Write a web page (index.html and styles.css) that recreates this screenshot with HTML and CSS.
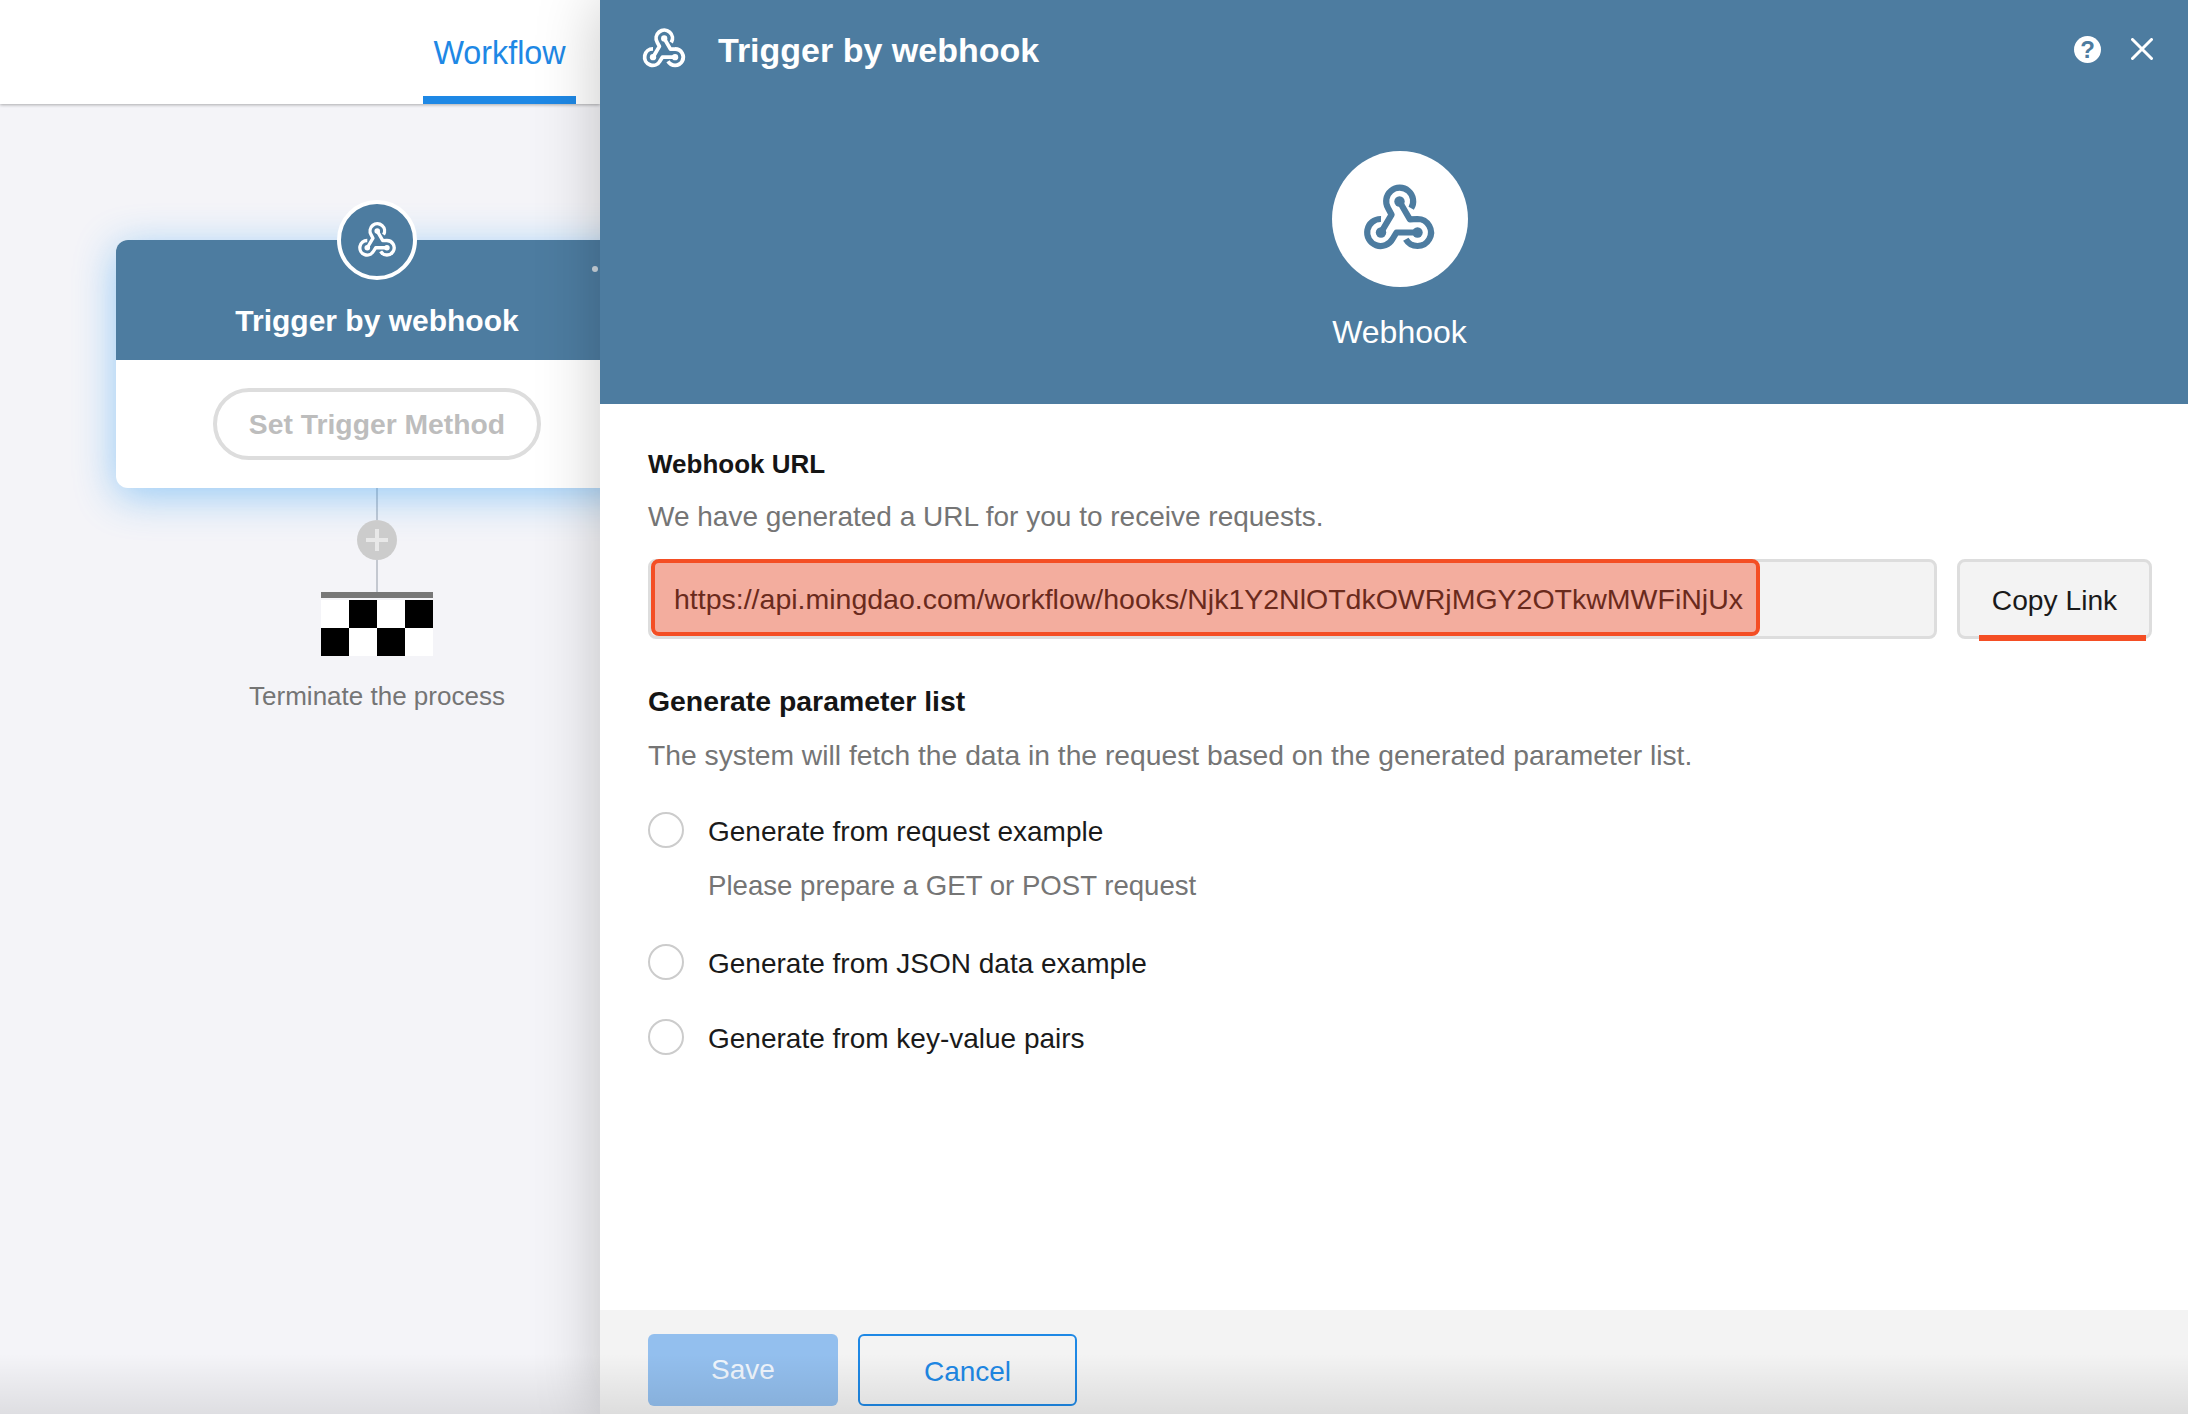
FILE: index.html
```html
<!DOCTYPE html>
<html lang="en">
<head>
<meta charset="utf-8">
<title>Trigger by webhook</title>
<link rel="stylesheet" href="styles.css">
</head>
<body>
<svg class="defs" width="0" height="0" aria-hidden="true">
  <symbol id="hook" viewBox="0 0 80 76">
    <g fill="none" stroke="currentColor" stroke-width="6.2" stroke-linecap="butt" stroke-linejoin="round">
      <path d="M21 51.5 L31.6 33.7 L28 27 A13.5 13.5 0 1 1 51.2 27.25"/>
      <path d="M39.5 20.5 L49.8 38.3 L57.5 38 A13.5 13.5 0 1 1 45.8 58.25"/>
      <path d="M57.5 51.5 H36.5 L32.5 58 A13.5 13.5 0 1 1 21 38"/>
    </g>
    <circle cx="39.5" cy="20.5" r="5.2" fill="currentColor"/>
    <circle cx="21" cy="51.5" r="5.2" fill="currentColor"/>
    <circle cx="57.5" cy="51.5" r="5.2" fill="currentColor"/>
  </symbol>
</svg>
<main class="app">
  <section class="flow">
    <header class="flow-top">
      <a class="tab">Workflow</a>
    </header>
    <div class="canvas">
      <article class="card">
        <div class="card-badge"><svg class="icon-small"><use href="#hook"/></svg></div>
        <div class="card-head">Trigger by webhook<i class="card-dot"></i></div>
        <div class="card-body"><span class="pill">Set Trigger Method</span></div>
      </article>
      <div class="line line-a"></div>
      <div class="plus"><span class="plus-h"></span><span class="plus-v"></span></div>
      <div class="line line-b"></div>
      <div class="flag">
        <div class="flag-bar"></div>
        <div class="flag-grid">
          <i></i><b></b><i></i><b></b>
          <b></b><i></i><b></b><i></i>
        </div>
      </div>
      <p class="end-label">Terminate the process</p>
    </div>
  </section>
  <section class="panel">
    <header class="panel-head">
      <div class="panel-bar">
        <svg class="icon-title"><use href="#hook"/></svg>
        <h1 class="panel-title">Trigger by webhook</h1>
        <span class="help">?</span>
        <svg class="close" viewBox="0 0 22 22"><path d="M1.5 1.5 20.5 20.5M20.5 1.5 1.5 20.5"/></svg>
      </div>
      <div class="hero">
        <div class="hero-circle"><svg class="icon-hero"><use href="#hook"/></svg></div>
        <div class="hero-name">Webhook</div>
      </div>
    </header>
    <div class="panel-body">
      <h2 class="heading">Webhook URL</h2>
      <p class="desc">We have generated a URL for you to receive requests.</p>
      <div class="url-row">
        <div class="url-field"><span class="url-mark">https://api.mingdao.com/workflow/hooks/Njk1Y2NlOTdkOWRjMGY2OTkwMWFiNjUx</span></div>
        <div class="copy">Copy Link<i class="copy-mark"></i></div>
      </div>
      <h2 class="heading heading-second">Generate parameter list</h2>
      <p class="desc desc-second">The system will fetch the data in the request based on the generated parameter list.</p>
      <div class="options">
        <div class="option"><span class="radio"></span><span class="option-label">Generate from request example</span></div>
        <p class="hint">Please prepare a GET or POST request</p>
        <div class="option option-mid"><span class="radio"></span><span class="option-label">Generate from JSON data example</span></div>
        <div class="option option-last"><span class="radio"></span><span class="option-label">Generate from key-value pairs</span></div>
      </div>
    </div>
    <footer class="panel-foot">
      <button class="btn btn-save">Save</button>
      <button class="btn btn-cancel">Cancel</button>
    </footer>
  </section>
</main>
<div class="vignette"></div>
</body>
</html>
```
FILE: styles.css
```css
* { box-sizing: border-box; }
html, body { margin: 0; height: 100%; overflow: hidden; }
body { font-family: "Liberation Sans", Arial, sans-serif; background: #f4f4f8; }
.defs { position: absolute; }
.app { display: flex; height: 1414px; width: 2188px; }
.flow { width: 600px; flex: none; overflow: hidden; position: relative; }
.flow-top { height: 104px; background: #fff; display: flex; justify-content: flex-end; padding-right: 24px; box-shadow: 0 1px 3px rgba(0,0,0,.3); position: relative; z-index: 1; }
.tab { width: 153px; height: 104px; border-bottom: 8px solid #1e88e5; color: #1e88e5; font-size: 32.3px; text-align: center; line-height: 106px; }
.canvas { display: flex; flex-direction: column; align-items: flex-start; padding: 136px 0 0 116px; }
.card { width: 522px; height: 248px; border-radius: 12px; background: #fff; box-shadow: 0 8px 40px rgba(33,150,243,.45); position: relative; flex: none; }
.card-badge { position: absolute; left: 221px; top: -40px; width: 80px; height: 80px; border-radius: 50%; background: #4d7ca0; border: 4px solid #fff; color: #fff; display: flex; align-items: center; justify-content: center; z-index: 1; }
.icon-small { width: 43px; height: 41px; }
.card-head { height: 120px; background: #4d7ca0; color: #fff; border-radius: 12px 12px 0 0; font-size: 30px; font-weight: 700; text-align: center; line-height: 162px; position: relative; }
.card-dot { position: absolute; left: 476px; top: 26px; width: 6px; height: 6px; border-radius: 50%; background: #ccd6de; }
.card-body { height: 128px; display: flex; align-items: flex-start; justify-content: center; padding-top: 28px; }
.pill { width: 328px; height: 72px; border: 4px solid #ddd; border-radius: 36px; color: #bdbdbd; font-size: 28.3px; font-weight: 700; text-align: center; line-height: 64px; }
.line { width: 2px; background: #c4c8d0; margin-left: 260px; }
.line-a { height: 32px; }
.line-b { height: 32px; }
.plus { width: 40px; height: 40px; margin-left: 241px; border-radius: 50%; background: #ccc; position: relative; }
.plus-h, .plus-v { position: absolute; background: #e8e8e8; }
.plus-h { left: 9px; top: 18px; width: 22px; height: 4px; }
.plus-v { left: 18px; top: 9px; width: 4px; height: 22px; }
.flag { margin-left: 205px; width: 112px; }
.flag-bar { height: 6px; background: #777; margin-bottom: 2px; }
.flag-grid { display: grid; grid-template-columns: repeat(4, 28px); grid-auto-rows: 28px; }
.flag-grid i { background: #fff; }
.flag-grid b { background: #000; }
.end-label { margin: 24px 0 0; width: 522px; text-align: center; color: #757575; font-size: 26px; line-height: 32px; }
.panel { width: 1588px; flex: none; display: flex; flex-direction: column; background: #fff; box-shadow: 0 0 60px rgba(0,0,0,.22); position: relative; z-index: 2; }
.panel-head { height: 404px; background: #4d7ca0; color: #fff; flex: none; }
.panel-bar { display: flex; align-items: center; height: 98px; padding: 0 35px 0 40px; }
.icon-title { width: 49px; height: 46px; color: #fff; margin-right: 29px; }
.panel-title { margin: 2px 0 0; font-size: 34px; font-weight: 700; flex: 1; }
.help { width: 27px; height: 27px; border-radius: 50%; background: #fff; color: #4d7ca0; font-size: 24px; font-weight: 700; line-height: 28px; text-align: center; margin-right: 30px; }
.close { width: 22px; height: 22px; fill: none; stroke: #fff; stroke-width: 3; stroke-linecap: round; }
.hero { display: flex; flex-direction: column; align-items: center; padding: 53px 0 0 11px; }
.hero-circle { width: 136px; height: 136px; border-radius: 50%; background: #fff; color: #4d7ca0; display: flex; align-items: center; justify-content: center; }
.icon-hero { width: 80px; height: 76px; }
.hero-name { font-size: 32px; margin-top: 26px; line-height: 38px; }
.panel-body { flex: 1; padding: 45px 36px 0 48px; }
.heading { margin: 0; font-size: 26px; font-weight: 700; color: #151515; line-height: 30px; }
.heading-second { margin-top: 47px; font-size: 28.4px; }
.desc { margin: 22px 0 0; font-size: 28px; color: #757575; line-height: 32px; }
.desc-second { font-size: 28.25px; margin-top: 23px; }
.url-row { display: flex; gap: 20px; margin-top: 26px; }
.url-field { width: 1289px; height: 80px; background: #f3f3f3; border: 3px solid #ddd; border-radius: 8px; }
.url-mark { display: block; width: 1109px; height: 77px; margin: -3px 0 0 0; background: #f3ad9e; border: 4px solid #f44e24; border-radius: 8px; color: #6a2a1c; font-size: 28.5px; line-height: 73px; padding-left: 19px; white-space: nowrap; }
.copy { width: 195px; height: 80px; background: #f3f3f3; border: 3px solid #ddd; border-radius: 8px; font-size: 28.2px; color: #1a1a1a; text-align: center; line-height: 77px; position: relative; }
.copy-mark { position: absolute; left: 19px; top: 73px; width: 167px; height: 6px; background: #f44e24; }
.options { margin-top: 41px; }
.option { display: flex; align-items: center; gap: 24px; height: 36px; font-size: 28px; color: #1a1a1a; }
.option-label { padding-top: 4px; }
.radio { width: 36px; height: 36px; border: 2px solid #ccc; border-radius: 50%; flex: none; background: #fff; }
.hint { margin: 22px 0 0 60px; font-size: 27.6px; color: #757575; line-height: 32px; }
.option-mid { margin-top: 42px; }
.option-last { margin-top: 39px; }
.panel-foot { height: 104px; flex: none; background: #f3f3f3; display: flex; gap: 20px; padding: 24px 0 0 48px; }
.btn { height: 72px; border-radius: 6px; font-family: inherit; font-size: 28px; padding: 0; }
.btn-save { width: 190px; background: #93bfee; border: 0; color: #f0f6fd; }
.btn-cancel { width: 219px; background: transparent; border: 2px solid #1e88e5; color: #1e88e5; padding-top: 4px; }
.vignette { position: absolute; left: 0; right: 0; bottom: 0; height: 60px; background: linear-gradient(rgba(0,0,0,0), rgba(0,0,0,.09)); pointer-events: none; z-index: 3; }
```
